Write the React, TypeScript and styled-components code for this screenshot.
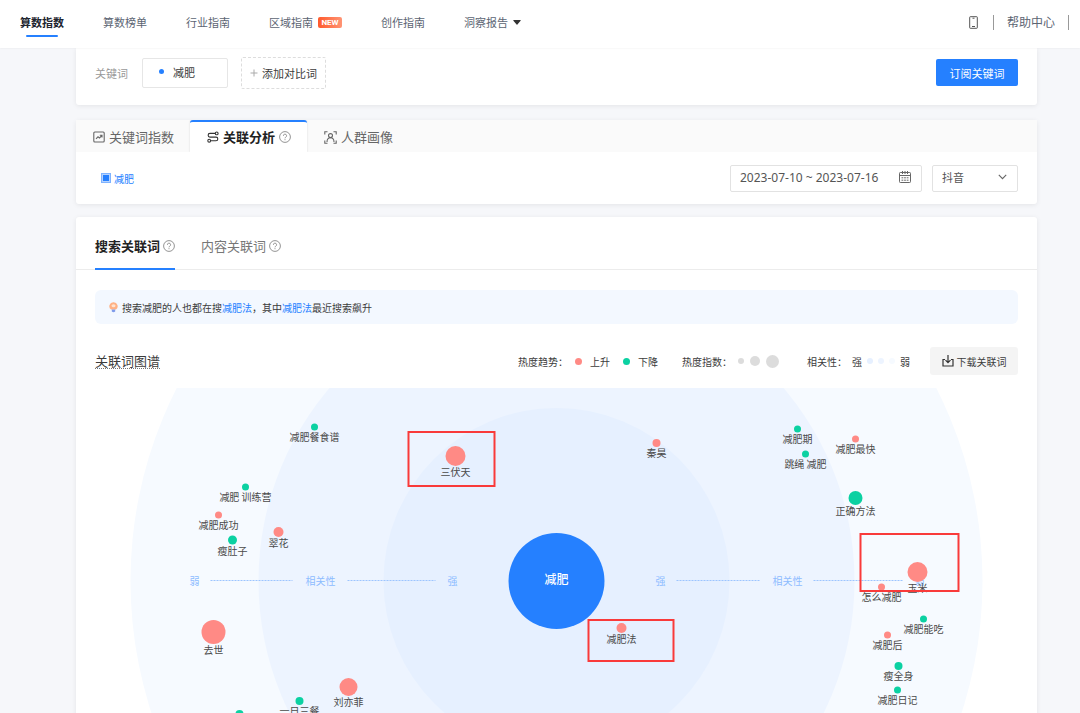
import React from "react";
import styled, { createGlobalStyle, css } from "styled-components";

const BLUE = "#2580ff";
const RISE = "#ff8a85";
const FALL = "#0bd1a2";

const GlobalStyle = createGlobalStyle`
  *, *::before, *::after { box-sizing: border-box; }
  body {
    margin: 0;
    background: #f6f7fa;
    color: #3c3c3c;
    font-family: "Noto Sans CJK SC", "Liberation Sans", sans-serif;
    font-size: 11px;
  }
  button, input, select { font: inherit; color: inherit; margin: 0; }
  a { color: inherit; text-decoration: none; }
`;

const Shell = styled.div`
  display: flex;
  flex-direction: column;
  height: 100vh;
`;

const Header = styled.header`
  display: flex;
  align-items: flex-start;
  justify-content: space-between;
  flex: none;
  height: 48px;
  padding: 12px 11px 0 20px;
  background: #fff;
  box-shadow: 0 0 2px rgba(0, 0, 0, 0.08);
  z-index: 1;
`;

const Nav = styled.nav`
  display: flex;
  gap: 39px;
`;

const NavLink = styled.a<{ $active?: boolean }>`
  display: flex;
  flex-direction: column;
  align-items: center;
  gap: 3px;
  line-height: 20px;
  color: #5c6573;
  white-space: nowrap;
  ${(p) =>
    p.$active &&
    css`
      color: #20242e;
      font-weight: 700;
      &::after {
        content: "";
        width: 32px;
        height: 2px;
        flex: none;
        border-radius: 1px;
        background: ${BLUE};
      }
    `}
`;

const NavRow = styled.span`
  display: flex;
  align-items: center;
  gap: 5px;
`;

const NewBadge = styled.span`
  width: 24px;
  border-radius: 2px;
  background: linear-gradient(90deg, #ff5a2c, #ff9474);
  color: #fff;
  font: 700 8px/11px Roboto, sans-serif;
  text-align: center;
`;

const HeaderTools = styled.div`
  display: flex;
  align-items: center;
  gap: 13px;
  font-size: 12px;
  line-height: 20px;
  color: #5c6573;
`;

const Divider = styled.span`
  width: 1px;
  height: 15px;
  background: #999;
`;

const IconButton = styled.button`
  display: flex;
  padding: 0;
  margin-right: 2px;
  border: 0;
  background: none;
  color: #555;
`;

const Main = styled.main`
  flex: 1;
  min-height: 0;
  overflow-y: auto;
  scrollbar-width: none;
  padding: 0 43px 0 76px;
`;

const Card = styled.section`
  background: #fff;
  border-radius: 3px;
  box-shadow: 0 1px 5px rgba(0, 0, 0, 0.08);
`;

const KeywordCard = styled(Card)`
  display: flex;
  align-items: center;
  height: 57px;
  margin-bottom: 15px;
  padding: 0 19px 8px;
  border-radius: 0 0 3px 3px;
`;

const KeywordLabel = styled.label`
  margin-right: 14px;
  color: #999;
`;

const KeywordBox = styled.span`
  display: flex;
  align-items: center;
  width: 86px;
  height: 30px;
  margin-right: 13px;
  padding: 0 0 2px 16px;
  gap: 9px;
  border: 1px solid #e6e6e6;
  border-radius: 2px;
`;

const Dot = styled.span<{ $size: number; $color: string }>`
  flex: none;
  width: ${(p) => p.$size}px;
  height: ${(p) => p.$size}px;
  border-radius: 50%;
  background: ${(p) => p.$color};
`;

const BareInput = styled.input`
  flex: 1;
  min-width: 0;
  padding: 0;
  border: 0;
  outline: 0;
  background: none;
`;

const AddButton = styled.button`
  display: flex;
  align-items: center;
  justify-content: center;
  gap: 4px;
  width: 85px;
  height: 32px;
  padding: 0;
  border: 1px dashed #ddd;
  border-radius: 2px;
  background: #fff;
`;

const SubscribeButton = styled.button`
  width: 82px;
  height: 27px;
  margin-left: auto;
  padding: 0;
  border: 0;
  border-radius: 2px;
  background: ${BLUE};
  color: #fff;
`;

const AnalysisCard = styled(Card)`
  margin-bottom: 13px;
`;

const TabBar = styled.div`
  display: flex;
  height: 32px;
  background: #fafafa;
`;

const Tab = styled.button<{ $active?: boolean }>`
  display: flex;
  align-items: center;
  gap: 4px;
  padding: 0 16px 0 17px;
  border: 0;
  border-top: 2px solid transparent;
  border-radius: 3px 3px 0 0;
  background: none;
  color: #666;
  font-size: 13px;
  line-height: 20px;
  ${(p) =>
    p.$active &&
    css`
      border-top-color: ${BLUE};
      background: #fff;
      color: #222;
      font-weight: 700;
      box-shadow: 0 0 2px rgba(0, 0, 0, 0.16);
      clip-path: inset(0 -2px 0 -2px);
    `}
`;

const FilterRow = styled.div`
  display: flex;
  align-items: center;
  gap: 10px;
  height: 52px;
  padding: 0 19px 0 25px;
`;

const CheckLabel = styled.label`
  display: flex;
  align-items: center;
  gap: 3px;
  margin-right: auto;
  color: ${BLUE};
  font-size: 10px;
`;

const CheckBox = styled.input`
  appearance: none;
  width: 10px;
  height: 10px;
  border: 1px solid #7fb3ff;
  background: #fff;
  &:checked {
    background: ${BLUE};
    box-shadow: inset 0 0 0 1px #b5d3ff;
  }
`;

const Field = styled.span<{ $width: number }>`
  display: flex;
  align-items: center;
  width: ${(p) => p.$width}px;
  height: 27px;
  padding: 0 10px 2px 9px;
  border: 1px solid #e2e2e2;
  border-radius: 2px;
  color: #555;
`;

const DateInput = styled(BareInput)`
  font-family: "Noto Sans", sans-serif;
  font-size: 12px;
`;

const Select = styled.select`
  flex: 1;
  height: 24px;
  padding: 0;
  border: 0;
  outline: 0;
  appearance: none;
  background: none;
`;

const SubTabs = styled.div`
  display: flex;
  gap: 26px;
  height: 53px;
  padding: 0 19px;
  border-bottom: 1px solid #ececec;
`;

const SubTab = styled.button<{ $active?: boolean }>`
  display: flex;
  align-items: center;
  gap: 3px;
  height: 53px;
  padding: 6px 0 0;
  border: 0;
  border-bottom: 2px solid ${(p) => (p.$active ? BLUE : "transparent")};
  background: none;
  color: ${(p) => (p.$active ? "#222" : "#777")};
  font-size: 13px;
  font-weight: ${(p) => (p.$active ? 700 : 400)};
  line-height: 20px;
`;

const CardBody = styled.div`
  padding: 20px 19px;
`;

const Hint = styled.p`
  display: flex;
  align-items: center;
  height: 34px;
  margin: 0 0 23px;
  padding: 0 14px;
  border-radius: 6px;
  background: #f3f8ff;
  font-size: 10px;
  svg { margin-right: 4px; }
  a { color: ${BLUE}; }
`;

const GraphHeader = styled.div`
  display: flex;
  align-items: center;
  height: 28px;
  margin-bottom: 13px;
  font-size: 10px;
`;

const GraphTitle = styled.h2`
  margin: 0 auto 0 0;
  border-bottom: 1px dotted #777;
  font-size: 13px;
  font-weight: 400;
  line-height: 15px;
`;

const Legend = styled.div<{ $gap: number; $after: number }>`
  display: flex;
  align-items: center;
  gap: ${(p) => p.$gap}px;
  margin-right: ${(p) => p.$after}px;
`;

const LegendItem = styled.span`
  display: flex;
  align-items: center;
  gap: 8px;
  margin-right: 6px;
  &:last-child { margin-right: 0; }
`;

const DownloadButton = styled.button`
  display: flex;
  align-items: center;
  justify-content: center;
  gap: 3px;
  width: 88px;
  height: 28px;
  padding: 0;
  border: 0;
  border-radius: 3px;
  background: #f4f4f4;
`;

const Graph = styled.svg`
  display: block;
  width: 100%;
  height: 386px;
  text { font-size: 10px; text-anchor: middle; fill: #4a4a4a; }
  text.axis { fill: #8dbcff; }
  text.core { font-size: 12px; font-weight: 500; fill: #fff; }
`;

const HelpIcon = () => (
  <svg width="12" height="12" viewBox="0 0 12 12" fill="none" stroke="#888" strokeWidth="0.9">
    <circle cx="6" cy="6" r="5.4" />
    <path d="M4.4 4.8a1.6 1.6 0 1 1 2.3 1.4c-.5.3-.7.5-.7 1.1M6 8.2v1" />
  </svg>
);

const TrendIcon = () => (
  <svg width="12" height="12" viewBox="0 0 12 12" fill="none" stroke="#666" strokeWidth="1.1">
    <rect x="0.8" y="1" width="10.4" height="10" rx="1" />
    <path d="M3 7.8l2-2 1.5 1.2L9 4.4M6.8 4.2H9v2.2" />
  </svg>
);

const RelationIcon = () => (
  <svg width="12" height="12" viewBox="0 0 12 12" fill="none" stroke="#333" strokeWidth="1.1">
    <path d="M8.2 2.4H3a1.8 1.8 0 0 0 0 3.7h6a1.8 1.8 0 0 1 0 3.6H3.6" />
    <circle cx="9.7" cy="2.4" r="1.4" />
    <circle cx="2.2" cy="9.7" r="1.4" />
  </svg>
);

const PortraitIcon = () => (
  <svg width="13" height="13" viewBox="0 0 13 13" fill="none" stroke="#666" strokeWidth="1.1">
    <path d="M.8 3.5V.8h2.7M9.5.8h2.7v2.7M12.2 9.5v2.7H9.5M3.5 12.2H.8V9.5" />
    <circle cx="6.5" cy="4.6" r="2" />
    <path d="M3 11c0-2.8 1.5-4.2 3.5-4.2S10 8.2 10 11" />
  </svg>
);

const PhoneIcon = () => (
  <svg width="9" height="13" viewBox="0 0 9 13" fill="none" stroke="currentColor">
    <rect x="0.7" y="0.7" width="7.6" height="11.6" rx="0.6" />
    <path d="M3 10.5h3M3.5 2.2h2" />
  </svg>
);

const CaretIcon = () => (
  <svg width="8" height="5" viewBox="0 0 8 5">
    <path d="M.6 0h6.8q.6.2.2.7L4.4 4.5q-.4.5-.8 0L.4.7Q0 .2.6 0z" fill="#333" />
  </svg>
);

const PlusIcon = () => (
  <svg width="8" height="8" viewBox="0 0 8 8" stroke="#aaa">
    <path d="M4 .5v7M.5 4h7" />
  </svg>
);

const CalendarIcon = () => (
  <svg width="12" height="12" viewBox="0 0 12 12" fill="none" stroke="#666">
    <rect x="0.5" y="1.5" width="11" height="10" rx="0.8" />
    <path d="M.5 4.5h11M3.5 0v3M6 0v3M8.500 0v3" />
    <path d="M2.5 6.8h7M2.5 9.2h7" strokeDasharray="1.8 0.8" />
  </svg>
);

const ChevronIcon = () => (
  <svg width="9" height="6" viewBox="0 0 9 6" fill="none" stroke="#666" strokeWidth="1.1">
    <path d="M.8.8l3.7 3.9L8.2.8" />
  </svg>
);

const BulbIcon = () => (
  <svg width="9" height="11" viewBox="0 0 9 11">
    <path d="M4.5.3a4 4 0 0 1 2.4 7.3H2.1A4 4 0 0 1 4.5.3z" fill="#ffb184" />
    <ellipse cx="4.5" cy="3.8" rx="2" ry="1.5" fill="#ffe3cf" />
    <path d="M2.8 7.6h3.4v1.9q-1.7 1.5-3.4 0z" fill="#7f9bea" />
  </svg>
);

const DownloadIcon = () => (
  <svg width="12" height="12" viewBox="0 0 12 12" fill="none" stroke="#333" strokeWidth="1.2">
    <path d="M3 4.5H1V11h10V4.5H9M6 0v7.5M3.5 5.2L6 7.7l2.5-2.5" />
  </svg>
);

// Offsets are measured from the centre of the graph; r is the bubble radius.
type Word = { label?: string; x: number; y: number; r: number; up?: boolean };

const words: Word[] = [
  { label: "减肥餐食谱", x: -242, y: -154, r: 3.5 },
  { label: "三伏天", x: -101, y: -125, r: 10, up: true },
  { label: "减肥 训练营", x: -311, y: -94, r: 3.5 },
  { label: "减肥成功", x: -338, y: -66, r: 3.5, up: true },
  { label: "瘦肚子", x: -324, y: -41, r: 4.5 },
  { label: "翠花", x: -278, y: -49, r: 5, up: true },
  { label: "去世", x: -343, y: 51, r: 12, up: true },
  { label: "刘亦菲", x: -208, y: 106, r: 9, up: true },
  { label: "一日三餐", x: -257, y: 120, r: 4 },
  { x: -317, y: 133, r: 4 },
  { label: "秦昊", x: 100, y: -138, r: 4, up: true },
  { label: "减肥法", x: 65, y: 47, r: 5, up: true },
  { label: "减肥期", x: 241, y: -152, r: 3.5 },
  { label: "跳绳 减肥", x: 249, y: -127, r: 3.5 },
  { label: "减肥最快", x: 299, y: -142, r: 3.5, up: true },
  { label: "正确方法", x: 299, y: -83, r: 7 },
  { label: "玉米", x: 361, y: -9, r: 10, up: true },
  { label: "怎么减肥", x: 325, y: 6, r: 3.5, up: true },
  { label: "减肥能吃", x: 367, y: 38, r: 3.5 },
  { label: "减肥后", x: 331, y: 54, r: 3.5, up: true },
  { label: "瘦全身", x: 342, y: 85, r: 4 },
  { label: "减肥日记", x: 341, y: 109, r: 3.5 },
];

const rings = [
  { r: 426, fill: "#f6faff" },
  { r: 298, fill: "#edf4ff" },
  { r: 173, fill: "#e6f0ff" },
];

const axisLabels = [
  { text: "弱", x: -362 },
  { text: "相关性", x: -236 },
  { text: "强", x: -104 },
  { text: "强", x: 104 },
  { text: "相关性", x: 231 },
  { text: "弱", x: 363 },
];

const axisLines = [
  [-346, -264],
  [-209, -121],
  [120, 203],
  [257, 346],
];

const highlights = [
  { x: -148, y: -149, w: 86, h: 54 },
  { x: 32, y: 39, w: 85, h: 41 },
  { x: 304, y: -47, w: 98, h: 57 },
];

const WordGraph = () => (
  <Graph role="img" aria-label="关联词图谱">
    <svg x="50%" y="193" overflow="visible">
      {rings.map((ring) => (
        <circle key={ring.r} r={ring.r} fill={ring.fill} />
      ))}
      {axisLines.map(([from, to]) => (
        <line key={from} x1={from} x2={to} y1="-0.5" y2="-0.5" stroke="#9cc5ff" strokeDasharray="2 1" />
      ))}
      {axisLabels.map((item) => (
        <text key={item.x} className="axis" x={item.x} y="4">
          {item.text}
        </text>
      ))}
      <circle r="48" fill={BLUE} />
      <text className="core" y="3">减肥</text>
      {words.map((word) => (
        <g key={`${word.x},${word.y}`}>
          {word.label && (
            <text x={word.x} y={word.y + word.r + 10}>
              {word.label}
            </text>
          )}
          <circle cx={word.x} cy={word.y} r={word.r} fill={word.up ? RISE : FALL} />
        </g>
      ))}
      {highlights.map((box) => (
        <rect key={box.x} x={box.x} y={box.y} width={box.w} height={box.h} fill="none" stroke="#f93a3a" strokeWidth="2" />
      ))}
    </svg>
  </Graph>
);

export default function App() {
  return (
    <Shell>
      <GlobalStyle />
      <Header>
        <Nav>
          <NavLink href="#index" $active>算数指数</NavLink>
          <NavLink href="#rank">算数榜单</NavLink>
          <NavLink href="#industry">行业指南</NavLink>
          <NavLink href="#region">
            <NavRow>区域指南<NewBadge>NEW</NewBadge></NavRow>
          </NavLink>
          <NavLink href="#creation">创作指南</NavLink>
          <NavLink href="#reports">
            <NavRow>洞察报告 <CaretIcon /></NavRow>
          </NavLink>
        </Nav>
        <HeaderTools>
          <IconButton aria-label="手机版"><PhoneIcon /></IconButton>
          <Divider />
          <a href="#help">帮助中心</a>
          <Divider />
        </HeaderTools>
      </Header>
      <Main>
        <KeywordCard>
          <KeywordLabel htmlFor="keyword">关键词</KeywordLabel>
          <KeywordBox>
            <Dot $size={5} $color={BLUE} />
            <BareInput id="keyword" defaultValue="减肥" />
          </KeywordBox>
          <AddButton><PlusIcon />添加对比词</AddButton>
          <SubscribeButton>订阅关键词</SubscribeButton>
        </KeywordCard>

        <AnalysisCard>
          <TabBar>
            <Tab><TrendIcon />关键词指数</Tab>
            <Tab $active><RelationIcon />关联分析<HelpIcon /></Tab>
            <Tab><PortraitIcon />人群画像</Tab>
          </TabBar>
          <FilterRow>
            <CheckLabel>
              <CheckBox type="checkbox" defaultChecked />
              减肥
            </CheckLabel>
            <Field $width={192}>
              <DateInput aria-label="日期范围" defaultValue="2023-07-10 ~ 2023-07-16" />
              <CalendarIcon />
            </Field>
            <Field $width={86}>
              <Select aria-label="平台" defaultValue="抖音">
                <option>抖音</option>
              </Select>
              <ChevronIcon />
            </Field>
          </FilterRow>
        </AnalysisCard>

        <Card>
          <SubTabs>
            <SubTab $active>搜索关联词<HelpIcon /></SubTab>
            <SubTab>内容关联词<HelpIcon /></SubTab>
          </SubTabs>
          <CardBody>
            <Hint>
              <BulbIcon />
              <span>
                搜索减肥的人也都在搜<a href="#word">减肥法</a>，其中<a href="#word">减肥法</a>最近搜索飙升
              </span>
            </Hint>
            <GraphHeader>
              <GraphTitle>关联词图谱</GraphTitle>
              <Legend $gap={7} $after={24}>
                热度趋势：
                <LegendItem><Dot $size={7} $color={RISE} />上升</LegendItem>
                <LegendItem><Dot $size={7} $color={FALL} />下降</LegendItem>
              </Legend>
              <Legend $gap={6} $after={28}>
                热度指数：
                <Dot $size={6} $color="#dcdcdc" />
                <Dot $size={10} $color="#dcdcdc" />
                <Dot $size={13} $color="#dcdcdc" />
              </Legend>
              <Legend $gap={5} $after={20}>
                相关性：
                <span>强</span>
                <Dot $size={6} $color="#e6f0ff" />
                <Dot $size={6} $color="#edf4ff" />
                <Dot $size={6} $color="#f6faff" />
                <span>弱</span>
              </Legend>
              <DownloadButton><DownloadIcon />下载关联词</DownloadButton>
            </GraphHeader>
            <WordGraph />
          </CardBody>
        </Card>
      </Main>
    </Shell>
  );
}
